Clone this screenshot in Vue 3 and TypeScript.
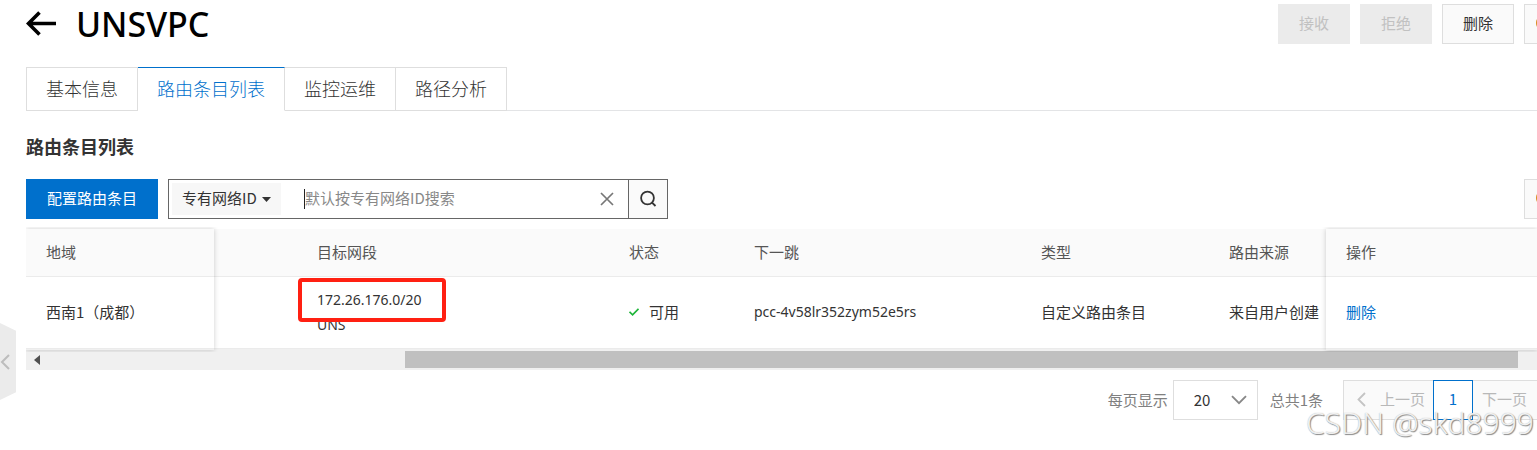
<script setup lang="ts">
import { ref } from 'vue'

interface RouteEntry {
  region: string
  cidr: string
  name: string
  status: string
  nextHop: string
  type: string
  source: string
}

const tabs: string[] = ['基本信息', '路由条目列表', '监控运维', '路径分析']
const activeTab = ref<number>(1)
const keyword = ref<string>('')
const entries: RouteEntry[] = [
  {
    region: '西南1（成都）',
    cidr: '172.26.176.0/20',
    name: 'UNS',
    status: '可用',
    nextHop: 'pcc-4v58lr352zym52e5rs',
    type: '自定义路由条目',
    source: '来自用户创建',
  },
]
</script>

<template>
  <div class="page">
    <header class="header">
      <button class="back" aria-label="返回">
        <svg width="32" height="26" viewBox="0 0 32 26" fill="none" stroke="#000" stroke-width="3.6">
          <path d="M2.5 12.5H30M13.5 1.5L2.5 12.5L13.5 23.5" />
        </svg>
      </button>
      <h1>UNSVPC</h1>
      <div class="actions">
        <button class="btn" disabled>接收</button>
        <button class="btn" disabled>拒绝</button>
        <button class="btn">删除</button>
        <button class="btn icon-btn" aria-label="刷新">
          <svg width="16" height="16" viewBox="0 0 16 16"><circle cx="8" cy="8" r="6" fill="none" stroke="#d98b1f" stroke-width="4" /></svg>
        </button>
      </div>
    </header>

    <nav class="tabs" role="tablist">
      <button
        v-for="(tab, i) in tabs"
        :key="tab"
        role="tab"
        class="tab"
        :class="{ active: i === activeTab }"
        :aria-selected="i === activeTab"
        @click="activeTab = i"
      >{{ tab }}</button>
    </nav>

    <h2>路由条目列表</h2>

    <div class="toolbar">
      <button class="primary">配置路由条目</button>
      <div class="search">
        <div class="field">
          <select aria-label="搜索类型">
            <option>专有网络ID</option>
          </select>
          <svg width="9" height="5" viewBox="0 0 9 5"><path d="M0 0H9L4.5 5Z" fill="#333" /></svg>
        </div>
        <span class="caret"></span>
        <input v-model="keyword" type="text" aria-label="搜索" placeholder="默认按专有网络ID搜索" />
        <button class="clear" aria-label="清除" @click="keyword = ''">
          <svg width="14" height="14" viewBox="0 0 14 14" stroke="#777" stroke-width="1.7"><path d="M1 1L13 13M13 1L1 13" /></svg>
        </button>
        <button class="go" aria-label="搜索">
          <svg width="18" height="18" viewBox="0 0 18 18" fill="none" stroke="#333" stroke-width="1.8"><circle cx="8.5" cy="8" r="6.4" /><path d="M12.8 12.4L16.5 16" /></svg>
        </button>
      </div>
      <button class="btn icon-btn refresh" aria-label="设置">
        <svg width="16" height="16" viewBox="0 0 16 16"><circle cx="8" cy="8" r="6" fill="none" stroke="#d98b1f" stroke-width="4" /></svg>
      </button>
    </div>

    <div class="table-wrap">
      <table>
        <colgroup>
          <col class="c-region" /><col class="c-gap" /><col class="c-cidr" /><col class="c-status" />
          <col class="c-hop" /><col class="c-type" /><col class="c-source" /><col />
        </colgroup>
        <thead>
          <tr>
            <th>地域</th><th></th><th>目标网段</th><th>状态</th>
            <th>下一跳</th><th>类型</th><th>路由来源</th><th>操作</th>
          </tr>
        </thead>
        <tbody>
          <tr v-for="e in entries" :key="e.nextHop">
            <td>{{ e.region }}</td>
            <td></td>
            <td>
              <div class="cidr">
                <span>{{ e.cidr }}</span>
                <span>{{ e.name }}</span>
                <i class="mark"></i>
              </div>
            </td>
            <td>
              <span class="status">
                <svg width="10" height="8" viewBox="0 0 10 8" fill="none" stroke="#1eb53a" stroke-width="1.7"><path d="M.5 3.8L3.6 6.8L9.5 .8" /></svg>
                {{ e.status }}
              </span>
            </td>
            <td class="latin">{{ e.nextHop }}</td>
            <td>{{ e.type }}</td>
            <td>{{ e.source }}</td>
            <td><a href="#">删除</a></td>
          </tr>
        </tbody>
      </table>
      <div class="pin pin-left"></div>
      <div class="pin pin-right"></div>
    </div>
    <div class="scrollbar">
      <svg width="6" height="10" viewBox="0 0 6 10"><path d="M6 0V10L0 5Z" fill="#505050" /></svg>
      <div class="thumb"></div>
    </div>

    <footer class="pager">
      <label for="size">每页显示</label>
      <div class="size">
        <select id="size"><option>20</option></select>
        <svg width="16" height="10" viewBox="0 0 16 10" fill="none" stroke="#888" stroke-width="1.9"><path d="M1 1.2L8 8.2L15 1.2" /></svg>
      </div>
      <span class="total">总共1条</span>
      <button class="pg prev" disabled>
        <svg width="9" height="15" viewBox="0 0 9 15" fill="none" stroke="#c4c4c4" stroke-width="1.8"><path d="M8 1L1.5 7.5L8 14" /></svg>
        上一页
      </button>
      <button class="pg current">1</button>
      <button class="pg next" disabled>下一页</button>
    </footer>

    <button class="handle" aria-label="展开">
      <svg width="10" height="16" viewBox="0 0 10 16" fill="none" stroke="#bdbdbd" stroke-width="2"><path d="M9 1L2 8L9 15" /></svg>
    </button>
    <div class="watermark">CSDN @skd8999</div>
  </div>
</template>

<style>
body {
  margin: 0;
  background: #fff;
}
</style>

<style scoped>
.page {
  position: relative;
  box-sizing: border-box;
  min-height: 450px;
  padding: 4px 0 0 26px;
  overflow: hidden;
  font: 15px/24px "Noto Sans CJK SC", sans-serif;
  color: #333;
}
.page * { box-sizing: border-box; }
button, select, input {
  margin: 0;
  padding: 0;
  border: 0;
  border-radius: 0;
  background: none;
  font: inherit;
  color: inherit;
  appearance: none;
  outline: none;
}
svg { display: block; flex: none; }
.header {
  display: flex;
  height: 40px;
  align-items: center;
}
.back { width: 50px; }
h1 {
  margin: 0;
  font: 500 34px/40px "Noto Sans", sans-serif;
  color: #000;
}
.actions {
  display: flex;
  gap: 10px;
  margin: 0 -27px 0 auto;
}
.btn {
  width: 72px;
  height: 40px;
  padding-bottom: 2px;
  border: 1px solid #dedede;
  background: #fafafa;
}
.btn:disabled {
  border-color: #ebebeb;
  background: #ebebeb;
  color: #c1c1c1;
}
.icon-btn {
  display: flex;
  width: 40px;
  align-items: center;
  justify-content: center;
}
.tabs {
  display: flex;
  height: 44px;
  margin-top: 23px;
  border-bottom: 1px solid #e3e4e6;
}
.tab {
  height: 44px;
  padding: 0 19px 2px;
  border: 1px solid #dedede;
  border-left: 0;
  background: #fff;
  font-size: 18px;
  font-weight: 300;
  color: #333;
}
.tab:first-child { border-left: 1px solid #dedede; }
.tab.active {
  border-top-color: #0070cc;
  border-bottom-color: #fff;
  color: #0070cc;
}
h2 {
  margin: 23px 0 21px;
  font: 700 18px/24px "Noto Sans CJK SC", sans-serif;
}
.toolbar {
  display: flex;
  gap: 10px;
}
.primary {
  width: 132px;
  height: 40px;
  padding-bottom: 2px;
  background: #0070cc;
  color: #fff;
}
.search {
  display: flex;
  width: 500px;
  height: 40px;
  align-items: center;
  border: 1px solid #666;
}
.field {
  display: flex;
  width: 109px;
  height: 32px;
  margin: 0 23px 0 3px;
  padding: 0 10px;
  align-items: center;
  justify-content: space-between;
  background: #f7f7f7;
}
.field select { padding-bottom: 2px; }
.caret {
  width: 1px;
  height: 20px;
  background: #222;
}
.search input {
  flex: 1;
  min-width: 0;
  height: 38px;
  padding-bottom: 4px;
}
.search input::placeholder { color: #888; opacity: 1; }
.clear { margin-right: 14px; }
.go {
  display: flex;
  width: 39px;
  height: 38px;
  align-items: center;
  justify-content: center;
  border-left: 1px solid #666;
  background: #fafafa;
}
.refresh { margin: 0 -27px 0 auto; }
.table-wrap {
  position: relative;
  margin-top: 10px;
}
table {
  width: 100%;
  table-layout: fixed;
  border-collapse: separate;
  border-spacing: 0;
}
.c-region { width: 188px; }
.c-gap { width: 83px; }
.c-cidr { width: 312px; }
.c-status { width: 125px; }
.c-hop { width: 287px; }
.c-type { width: 188px; }
.c-source { width: 117px; }
th, td {
  padding: 0 0 2px 20px;
  border-bottom: 1px solid #ebebeb;
  text-align: left;
  white-space: nowrap;
}
th {
  height: 48px;
  background: #fafafa;
  font-weight: 400;
  color: #555;
}
td { height: 72px; }
.latin, .cidr {
  font: 14px/25px "Noto Sans", sans-serif;
}
.cidr {
  position: relative;
  display: flex;
  flex-direction: column;
}
.mark {
  position: absolute;
  top: -9px;
  left: -19px;
  width: 148px;
  height: 44px;
  border: 4px solid #ff2012;
  border-radius: 4px;
}
.status {
  display: flex;
  gap: 10px;
  align-items: center;
}
a { color: #0070cc; text-decoration: none; }
.pin {
  position: absolute;
  top: 0;
  bottom: -1px;
  box-shadow: 0 0 5px rgba(0, 0, 0, 0.2);
  pointer-events: none;
}
.pin-left {
  left: 0;
  width: 188px;
  clip-path: inset(-2px -6px -2px 0);
}
.pin-right {
  left: 1300px;
  right: 0;
  clip-path: inset(-2px 0 -2px -6px);
}
.scrollbar {
  display: flex;
  height: 21px;
  padding: 2px 19px 2px 8px;
  align-items: center;
  background: #f0f0f0;
}
.thumb {
  width: 75%;
  height: 17px;
  margin-left: auto;
  background: #c0c0c0;
}
.pager {
  display: flex;
  height: 40px;
  margin: 10px -38px 0 0;
  align-items: center;
  justify-content: flex-end;
  color: #808080;
}
.size {
  position: relative;
  display: flex;
  width: 85px;
  height: 40px;
  margin: 0 12px 0 5px;
  padding: 0 10px 0 20px;
  align-items: center;
  justify-content: space-between;
  border: 1px solid #dedede;
  color: #333;
}
.total { margin-right: 20px; }
.pg {
  height: 40px;
  padding-bottom: 2px;
  border: 1px solid #dedede;
  background: #fafafa;
}
.pg:disabled { color: #b8b8b8; }
.prev {
  display: flex;
  width: 90px;
  padding-left: 13px;
  gap: 14px;
  align-items: center;
  border-right: 0;
}
.current {
  width: 40px;
  border-color: #0070cc;
  background: #fff;
  color: #0070cc;
}
.next {
  width: 102px;
  padding-left: 9px;
  border-left: 0;
  text-align: left;
}
.handle {
  position: absolute;
  top: 323px;
  left: 0;
  display: flex;
  width: 16px;
  height: 77px;
  align-items: center;
  background: #ebebeb;
  clip-path: polygon(0 0, 100% 10%, 100% 90%, 0 100%);
}
.watermark {
  position: absolute;
  right: 3px;
  bottom: 12px;
  font: 300 30px/30px "Noto Sans", sans-serif;
  color: rgba(255, 255, 255, 0.85);
  text-shadow: 1px 1px 1px #888, 0 0 1px #aaa;
  pointer-events: none;
}
</style>
